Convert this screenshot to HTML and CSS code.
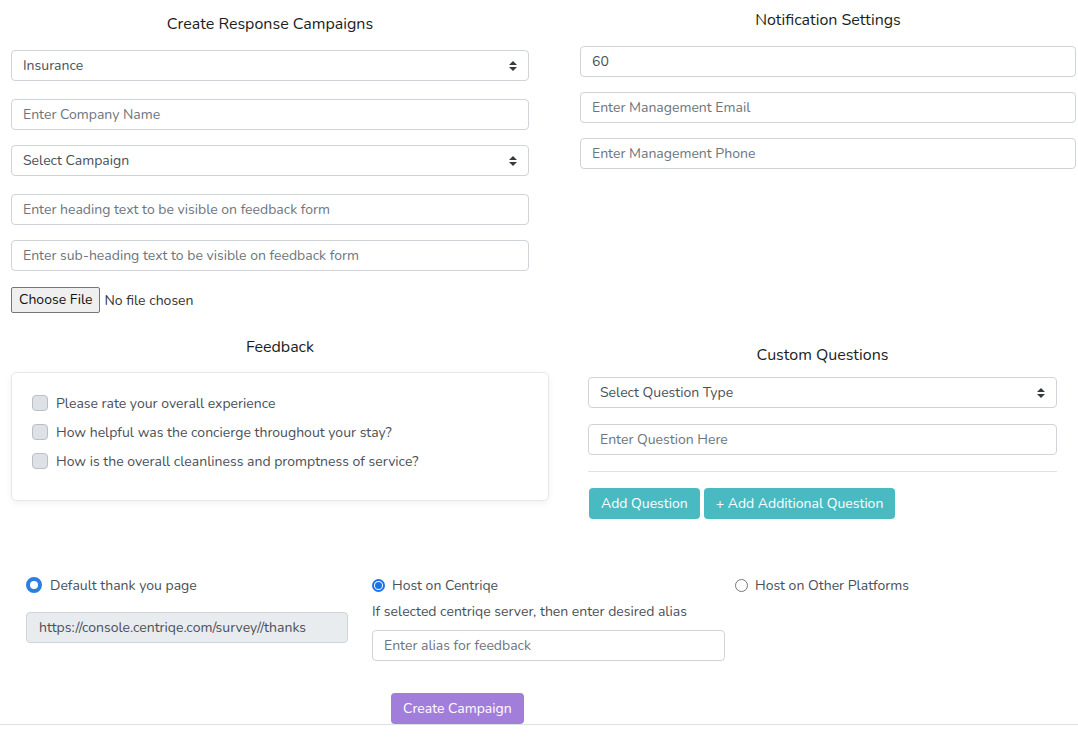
FILE: index.html
```html
<!DOCTYPE html>
<html>
<head>
<meta charset="utf-8">
<link rel="stylesheet" href="styles.css">
</head>
<body>
<div class="page">
  <div class="row top">
    <div class="col left">
      <h3 class="title">Create Response Campaigns</h3>
      <div class="field sel mt0"><span class="val">Insurance</span><span class="arrows"></span></div>
      <div class="field mt18"><span class="ph">Enter Company Name</span></div>
      <div class="field sel mt15"><span class="val">Select Campaign</span><span class="arrows"></span></div>
      <div class="field mt18"><span class="ph">Enter heading text to be visible on feedback form</span></div>
      <div class="field mt15"><span class="ph">Enter sub-heading text to be visible on feedback form</span></div>
      <div class="file"><span class="filebtn">Choose File</span><span class="nofile">No file chosen</span></div>
    </div>
    <div class="col right">
      <h3 class="title">Notification Settings</h3>
      <div class="field mt0"><span class="val">60</span></div>
      <div class="field mt15"><span class="ph">Enter Management Email</span></div>
      <div class="field mt15"><span class="ph">Enter Management Phone</span></div>
    </div>
  </div>

  <div class="row mid">
    <div class="col fb">
      <h3 class="title">Feedback</h3>
      <div class="card">
        <label class="chk"><span class="box"></span>Please rate your overall experience</label>
        <label class="chk"><span class="box"></span>How helpful was the concierge throughout your stay?</label>
        <label class="chk"><span class="box"></span>How is the overall cleanliness and promptness of service?</label>
      </div>
    </div>
    <div class="col cq">
      <h3 class="title">Custom Questions</h3>
      <div class="field sel mt0"><span class="val">Select Question Type</span><span class="arrows"></span></div>
      <div class="field mt16"><span class="ph">Enter Question Here</span></div>
      <hr class="sep">
      <div class="btns">
        <span class="btn teal">Add Question</span>
        <span class="btn teal">+ Add Additional Question</span>
      </div>
    </div>
  </div>

  <div class="row bottom">
    <div class="bcol b1">
      <div class="radio"><span class="rdot big"></span>Default thank you page</div>
      <div class="field disabled"><span class="val">https://console.centriqe.com/survey//thanks</span></div>
    </div>
    <div class="bcol b2">
      <div class="radio"><span class="rdot sel"></span>Host on Centriqe</div>
      <div class="hint">If selected centriqe server, then enter desired alias</div>
      <div class="field alias"><span class="ph">Enter alias for feedback</span></div>
    </div>
    <div class="bcol b3">
      <div class="radio"><span class="rdot"></span>Host on Other Platforms</div>
    </div>
  </div>

  <div class="footer">
    <span class="btn purple">Create Campaign</span>
  </div>
</div>
</body>
</html>
```

FILE: styles.css
```css
* { box-sizing: border-box; }
html, body { margin: 0; padding: 0; background: #fff; }
body {
  font-family: "Nunito", "Lato", "Open Sans", sans-serif;
  font-size: 14px;
  color: #495057;
}
.page { width: 1078px; }
.row { display: flex; }
.title {
  margin: 0;
  font-size: 16px;
  font-weight: 400;
  color: #1b1e21;
  text-align: center;
  line-height: 20px;
}
.top { padding-left: 11px; }
.left { width: 518px; padding-top: 14px; }
.left .title { margin-bottom: 16px; }
.right { width: 496px; margin-left: 51px; padding-top: 10px; }
.right .title { margin-bottom: 16px; }

.field {
  height: 31px;
  border: 1px solid #ced4da;
  border-radius: 4px;
  display: flex;
  align-items: center;
  padding: 0 12px 0 11px;
  background: #fff;
  line-height: 1;
}
.field .ph { color: #6c757d; }
.field .val { color: #495057; }
.sel { justify-content: space-between; }
.arrows {
  width: 8px; height: 10px; position: relative;
  margin-right: -1px;
}
.arrows::before, .arrows::after {
  content: ""; position: absolute; left: 0;
  border-left: 4px solid transparent; border-right: 4px solid transparent;
}
.arrows::before { top: 0; border-bottom: 4px solid #343a40; }
.arrows::after { bottom: 0; border-top: 4px solid #343a40; }
.mt0 { margin-top: 0; }
.mt15 { margin-top: 15px; }
.mt16 { margin-top: 16px; }
.mt18 { margin-top: 18px; }

.file { margin-top: 16px; display: flex; align-items: center; font-size: 14px; color: #222; }
.filebtn {
  display: inline-block;
  height: 26px;
  line-height: 24px;
  padding: 0 7px;
  background: #efefef;
  border: 1px solid #767676;
  border-radius: 2px;
  color: #111;
}
.nofile { margin-left: 4px; color: #333; }

.mid { padding-left: 11px; margin-top: 24px; }
.fb { width: 538px; }
.fb .title { margin-bottom: 15px; }
.card {
  height: 129px;
  border: 1px solid #e6e8ea;
  border-radius: 5px;
  box-shadow: 0 2px 6px rgba(0,0,0,0.06);
  padding: 22px 20px 0 20px;
}
.chk { display: flex; align-items: center; height: 16px; }
.chk + .chk { margin-top: 13px; }
.box {
  width: 16px; height: 16px;
  border: 1px solid #b8bfc6;
  background: #dee2e6;
  border-radius: 4px;
  margin-right: 8px;
  flex: none;
}
.cq { width: 469px; margin-left: 39px; padding-top: 8px; }
.cq .title { margin-bottom: 12px; }
.sep { border: 0; border-top: 1px solid #dee2e6; margin: 16px 0 16px; }
.btns { display: flex; gap: 4px; padding-left: 1px; }
.btn {
  display: inline-flex; align-items: center;
  height: 31px; padding: 0 12px;
  border-radius: 4px;
  color: #fff;
  font-size: 14px;
}
.teal { background: #4abac2; }
.purple { background: #a27edb; }

.bottom { padding-left: 26px; margin-top: 58px; }
.bcol { flex: none; }
.b1 { width: 346px; }
.b2 { width: 363px; }
.b3 { width: 300px; }
.radio { display: flex; align-items: center; height: 16px; color: #495057; }
.rdot {
  width: 13px; height: 13px; border-radius: 50%;
  border: 1px solid #767676; background: #fff;
  margin-right: 7px; flex: none;
  position: relative;
}
.rdot.sel { border: 2px solid #1a73e8; }
.rdot.sel::after {
  content: ""; position: absolute; left: 1px; top: 1px;
  width: 7px; height: 7px; border-radius: 50%; background: #1a73e8;
}
.b1 .rdot.big {
  width: 16px; height: 16px; border: 4.5px solid #2d7ee0; background: #fff;
  margin-right: 8px;
}
.b1 .field.disabled { margin-top: 19px; width: 322px; background: #e9ecef; padding-left: 12px; }
.hint { margin-top: 9px; line-height: 19px; }
.alias { margin-top: 9px; width: 353px; }

.footer {
  margin-top: 32px;
  border-bottom: 1px solid #dee2e6;
  padding-left: 391px;
  height: 32px;
}
.footer .btn { height: 31px; padding: 0 12px; }
```
